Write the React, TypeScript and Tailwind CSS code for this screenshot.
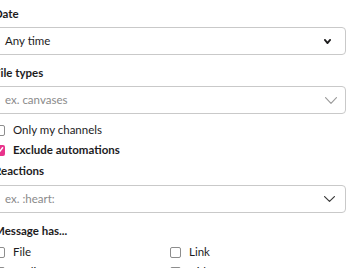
import React from "react";

function Chevron({ w, h, color, stroke }: { w: number; h: number; color: string; stroke: number }) {
  return (
    <svg width={w} height={h} viewBox={`0 0 ${w} ${h}`} fill="none">
      <path
        d={`M${stroke / 2} ${stroke / 2} L${w / 2} ${h - stroke / 2} L${w - stroke / 2} ${stroke / 2}`}
        stroke={color}
        strokeWidth={stroke}
        strokeLinecap="round"
        strokeLinejoin="round"
      />
    </svg>
  );
}

function Label({ children, className = "" }: { children: React.ReactNode; className?: string }) {
  return (
    <div className={`h-5 text-[11.5px] font-bold leading-5 text-[#1d1c1d] ${className}`}>{children}</div>
  );
}

function Box({ checked = false }: { checked?: boolean }) {
  if (checked) {
    return (
      <span className="flex h-[11px] w-[11px] items-center justify-center rounded-[2px] bg-[#e8338b]">
        <svg width="8" height="8" viewBox="0 0 8 8" fill="none">
          <path d="M1.5 4.2 L3.3 6 L6.6 1.8" stroke="white" strokeWidth="1.5" strokeLinecap="round" strokeLinejoin="round" />
        </svg>
      </span>
    );
  }
  return <span className="h-[11px] w-[11px] rounded-[2px] border border-[#8d8d8d] bg-white" />;
}

function Check({ label, checked = false, bold = false }: { label: string; checked?: boolean; bold?: boolean }) {
  return (
    <div className="flex h-5 items-center gap-[8px]">
      <Box checked={checked} />
      <span className={`text-[11.5px] leading-5 text-[#1d1c1d] ${bold ? "font-bold" : ""}`}>{label}</span>
    </div>
  );
}

export default function App() {
  return (
    <div className="h-[268px] w-[348px] overflow-hidden bg-white">
      <div
        className="-ml-[6px] w-[352px] pt-[4px]"
        style={{ fontFamily: "Lato, 'Noto Sans', sans-serif" }}
      >
        {/* DATE */}
        <Label>Date</Label>
        <div className="mt-[3px] flex h-7 items-center justify-between rounded-[4px] border border-[#c9c9c9] pl-[10px] pr-[14px]">
          <span className="text-[11.5px] text-[#1d1c1d]">Any time</span>
          <Chevron w={7} h={5} color="#1d1c1d" stroke={1.8} />
        </div>

        {/* FILE TYPES */}
        <Label className="mt-[8px]">File types</Label>
        <div className="mt-[3px] flex h-7 items-center justify-between rounded-[4px] border border-[#c9c9c9] pl-[10px] pr-[8px]">
          <span className="text-[11.5px] text-[#8a8a8a]">ex. canvases</span>
          <Chevron w={12} h={7} color="#9a9a9a" stroke={1.1} />
        </div>

        {/* CHECKS */}
        <div className="mt-[6px]">
          <Check label="Only my channels" />
          <Check label="Exclude automations" checked bold />
        </div>

        {/* REACTIONS */}
        <Label className="mt-[1px]">Reactions</Label>
        <div className="mt-[4px] flex h-7 items-center justify-between rounded-[4px] border border-[#c9c9c9] pl-[10px] pr-[10px]">
          <span className="text-[11.5px] text-[#8a8a8a]">ex. :heart:</span>
          <Chevron w={11} h={6} color="#3a3a3a" stroke={1.2} />
        </div>

        {/* MESSAGE HAS */}
        <Label className="mt-[8px]">Message has...</Label>
        <div className="mt-[1px] grid grid-cols-[176px_176px]">
          <Check label="File" />
          <Check label="Link" />
          <Check label="Audio" />
          <Check label="Video" />
        </div>
      </div>
    </div>
  );
}
